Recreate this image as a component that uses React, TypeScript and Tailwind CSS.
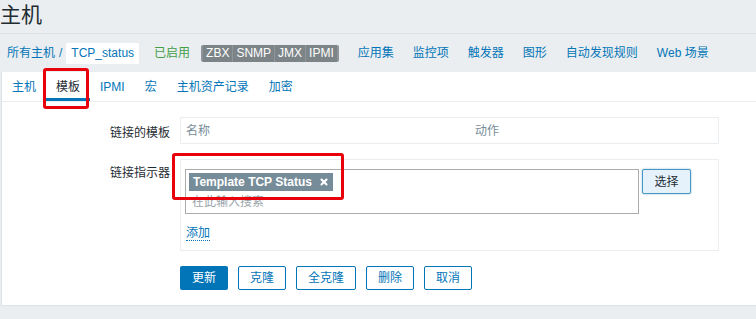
import { X } from 'lucide-react'

const FONT = "font-['Liberation_Sans','Noto_Sans_CJK_SC',sans-serif]"

const navLinks = ['应用集', '监控项', '触发器', '图形', '自动发现规则', 'Web 场景']
const tabs = ['主机', '模板', 'IPMI', '宏', '主机资产记录', '加密']
const badges = ['ZBX', 'SNMP', 'JMX', 'IPMI']

function OutlineButton({ label, width }: { label: string; width: string }) {
  return (
    <button
      className={`${width} h-[24px] rounded-[2px] border border-[#0275b8] bg-white text-[12px] text-[#0275b8]`}
    >
      {label}
    </button>
  )
}

export default function App() {
  return (
    <div className={`${FONT} relative w-[756px] h-[319px] overflow-hidden bg-[#ebeef0] text-[#1f2c33]`}>
      {/* page title */}
      <div className="h-[33px] pt-[2px] text-[21px] leading-[26px] text-[#1f2c33]">主机</div>

      {/* host navigation */}
      <div className="h-[39px] border-t border-[#dde2e5] flex items-center pl-[7px] text-[12px]">
        <span className="text-[#0275b8]">所有主机</span>
        <span className="mx-[4px] text-[#0275b8]">/</span>
        <span className="bg-white h-[21px] px-[5px] flex items-center text-[#0275b8]">TCP_status</span>
        <span className="ml-[15px] text-[#429e47]">已启用</span>
        <div className="ml-[11px] h-[17px] flex rounded-[2px] overflow-hidden bg-[#8d959a] gap-px px-[2px]">
          {badges.map(b => (
            <span key={b} className="bg-[#7c8488] px-[3px] flex items-center text-[12px] text-white">
              {b}
            </span>
          ))}
        </div>
        <div className="ml-[19px] flex gap-[19px]">
          {navLinks.map(l => (
            <span key={l} className="text-[#0275b8]">{l}</span>
          ))}
        </div>
      </div>

      {/* main panel */}
      <div className="ml-[1px] h-[234px] bg-white border-l border-b border-[#dde2e5]">
        {/* tabs */}
        <div className="h-[30px] flex border-b border-[#ebeef0] text-[12px]">
          {tabs.map(t => (
            <div
              key={t}
              className={`px-[10px] flex items-center ${
                t === '模板'
                  ? 'text-[#1f2c33] border-b-[3px] border-[#0275b8] pt-[3px]'
                  : 'text-[#0275b8]'
              }`}
            >
              {t}
            </div>
          ))}
        </div>

        {/* form */}
        <div className="pt-[15px] text-[12px]">
          <div className="flex">
            <div className="w-[168px] text-right pt-[7px] text-[#1f2c33]">链接的模板</div>
            <div className="ml-[10px] w-[539px] h-[27px] border border-[#ebeef0] flex items-center text-[#768d99]">
              <span className="pl-[5px] w-[294px]">名称</span>
              <span>动作</span>
            </div>
          </div>

          <div className="flex mt-[15px]">
            <div className="w-[168px] text-right pt-[5px] text-[#1f2c33]">链接指示器</div>
            <div className="ml-[10px] w-[539px] h-[92px] border border-[#ebeef0] pl-[4px] pt-[9px]">
              <div className="flex items-start gap-[3px]">
                <div className="w-[454px] h-[45px] border border-[#acacac] p-[3px]">
                  <div className="inline-flex items-center h-[18px] bg-[#768d99] px-[4px] gap-[7px] text-white font-bold">
                    <span>Template TCP Status</span>
                    <X className="w-[10px] h-[10px]" strokeWidth={5} />
                  </div>
                  <div className="pl-[3px] pt-[2px] text-[#9ba5ab]">在此输入搜索</div>
                </div>
                <button className="w-[49px] h-[25px] rounded-[2px] border border-[#4796c4] bg-[#e6f2fb] text-[12px] text-[#1f2c33] shadow-[0_0_2px_#7fb5da]">
                  选择
                </button>
              </div>
              <div className="mt-[10px] pl-[1px]">
                <span className="text-[#0275b8] border-b border-dotted border-[#0275b8]">添加</span>
              </div>
            </div>
          </div>

          <div className="flex mt-[15px] ml-[178px] gap-[10px]">
            <button className="w-[48px] h-[24px] rounded-[2px] bg-[#0275b8] text-[12px] text-white">更新</button>
            <OutlineButton label="克隆" width="w-[48px]" />
            <OutlineButton label="全克隆" width="w-[60px]" />
            <OutlineButton label="删除" width="w-[48px]" />
            <OutlineButton label="取消" width="w-[48px]" />
          </div>
        </div>
      </div>

      {/* red annotation boxes */}
      <div className="absolute left-[43px] top-[68px] w-[46px] h-[41px] border-[3px] border-[#e8000b] rounded-[3px]" />
      <div className="absolute left-[172px] top-[153px] w-[172px] h-[47px] border-[3px] border-[#e8000b] rounded-[3px]" />
    </div>
  )
}
